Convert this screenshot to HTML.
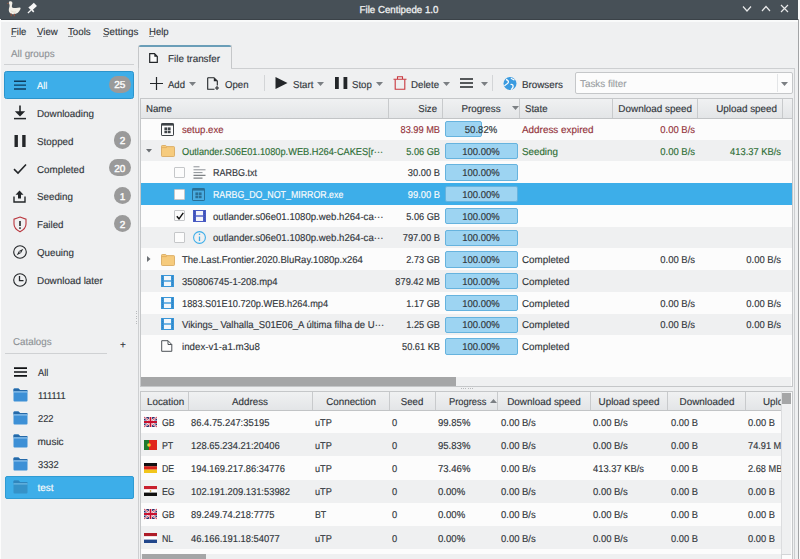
<!DOCTYPE html><html><head><meta charset="utf-8"><title>File Centipede</title><style>
html,body{margin:0;padding:0;}
body{width:800px;height:559px;overflow:hidden;position:relative;background:#eff0f1;font-family:"Liberation Sans", sans-serif;}
.t{-webkit-text-stroke:0.15px currentColor;text-rendering:geometricPrecision;position:absolute;white-space:nowrap;line-height:20px;height:20px;}
.b{position:absolute;}
svg.b{overflow:visible;}

</style></head><body>
<div class="b" style="left:798px;top:0px;width:2px;height:559px;background:#fafafa;"></div>
<div class="b" style="left:798px;top:19px;width:1px;height:540px;background:#a2a4a6;"></div>
<div class="b" style="left:0px;top:0px;width:798px;height:19px;background:#475057;"></div>
<div class="b" style="left:0px;top:19px;width:798px;height:1px;background:#3b4248;"></div>
<div class="b" style="left:0px;top:20px;width:798px;height:2px;background:#f9fafa;"></div>
<div class="b" style="left:0px;top:19px;width:1px;height:540px;background:#fcfcfc;"></div>
<div class="t" style="left:199px;width:400px;text-align:center;top:0.94px;font-size:10.0px;color:#eff0f1;transform:scaleX(0.9707);transform-origin:center;-webkit-text-stroke:0.3px #eff0f1;">File Centipede 1.0</div>
<svg class="b" style="left:742px;top:5px" width="10" height="8" viewBox="0 0 10 8"><path d="M1 1.5 L5 6 L9 1.5" stroke="#e8e9ea" stroke-width="1.2" fill="none"/></svg>
<svg class="b" style="left:761px;top:5px" width="10" height="8" viewBox="0 0 10 8"><path d="M1 6 L5 1.5 L9 6" stroke="#e8e9ea" stroke-width="1.2" fill="none"/></svg>
<svg class="b" style="left:780px;top:4px" width="9" height="9" viewBox="0 0 9 9"><path d="M1 1 L8 8 M8 1 L1 8" stroke="#e8e9ea" stroke-width="1.2" fill="none"/></svg>
<svg class="b" style="left:0px;top:0px" width="40" height="19" viewBox="0 0 40 19"><path d="M8.6 4.2 L6.9 3.6 L8.4 2.4z" fill="#9a5a44"/>
<path d="M9.2 1.6 C10.8 0.6 12.6 1.4 12.4 3.2 C12.2 4.6 11.6 5.8 12 7.2 C13.6 8.2 16.5 8.4 19.6 7.6 C20.6 7.4 20.8 8.2 20.4 9.2 C19.4 11.8 17 14 13.6 14.2 C10.6 14.4 8.9 12.6 8.8 10.2 C8.7 8.2 9.9 6.8 9.5 5 C9.2 3.8 8.5 2.6 9.2 1.6z" fill="#f3f0e8"/>
<path d="M11.2 13.6 V16.3 M14.4 13.8 V16.3" stroke="#8a5040" stroke-width="1.3"/>
<path d="M10.8 10.5 C12 12 14 12.4 16 11.8" stroke="#d8d2c4" stroke-width="0.7" fill="none"/>
<path d="M30.8 8.6 L35.4 4.4" stroke="#f7f7f7" stroke-width="4.6" stroke-linecap="butt"/>
<path d="M28.9 7.0 L33.8 11.9" stroke="#f7f7f7" stroke-width="1.5"/>
<path d="M30.9 10.2 L27.9 13" stroke="#f7f7f7" stroke-width="1.2"/></svg>
<div class="t" style="left:11px;top:22.93px;font-size:10.0px;color:#31363b;transform:scaleX(0.9545);transform-origin:left;">File</div>
<div class="b" style="left:11px;top:36px;width:4.5px;height:1.4px;background:#8a8d90;"></div>
<div class="t" style="left:37px;top:22.93px;font-size:10.0px;color:#31363b;transform:scaleX(0.9631);transform-origin:left;">View</div>
<div class="b" style="left:37px;top:36px;width:4.5px;height:1.4px;background:#8a8d90;"></div>
<div class="t" style="left:68px;top:22.93px;font-size:10.0px;color:#31363b;transform:scaleX(0.9700);transform-origin:left;">Tools</div>
<div class="b" style="left:68px;top:36px;width:4.5px;height:1.4px;background:#8a8d90;"></div>
<div class="t" style="left:103px;top:22.93px;font-size:10.0px;color:#31363b;transform:scaleX(0.9778);transform-origin:left;">Settings</div>
<div class="b" style="left:103px;top:36px;width:4.5px;height:1.4px;background:#8a8d90;"></div>
<div class="t" style="left:149px;top:22.93px;font-size:10.0px;color:#31363b;transform:scaleX(0.9579);transform-origin:left;">Help</div>
<div class="b" style="left:149px;top:36px;width:4.5px;height:1.4px;background:#8a8d90;"></div>
<div class="t" style="left:11px;top:44.94px;font-size:10.0px;color:#8e9296;transform:scaleX(0.9820);transform-origin:left;">All groups</div>
<div class="b" style="left:4px;top:64px;width:130px;height:1px;background:#cfd1d3;"></div>
<div class="b" style="left:4px;top:71px;width:130px;height:28px;background:#3daee9;border-radius:2.5px;box-sizing:border-box;border:1px solid #2b94cc;"></div>
<div class="t" style="left:37px;top:76.94px;font-size:10.0px;color:#fcfcfc;transform:scaleX(0.9280);transform-origin:left;">All</div>
<div class="b" style="left:108.5px;top:75.9px;width:22px;height:17px;background:#9a9a9a;border-radius:8.5px;"></div>
<div class="t" style="left:-80.2px;width:400px;text-align:center;top:76.14px;font-size:10.0px;color:#fcfcfc;-webkit-text-stroke:0.4px #fcfcfc;">25</div>
<div class="t" style="left:37px;top:104.80px;font-size:10.0px;color:#31363b;transform:scaleX(0.9850);transform-origin:left;">Downloading</div>
<div class="t" style="left:37px;top:132.66px;font-size:10.0px;color:#31363b;transform:scaleX(0.9785);transform-origin:left;">Stopped</div>
<div class="b" style="left:113.6px;top:131.22px;width:17.4px;height:17.4px;background:#9a9a9a;border-radius:50%;"></div>
<div class="t" style="left:-77.6px;width:400px;text-align:center;top:132.06px;font-size:10.0px;color:#fcfcfc;-webkit-text-stroke:0.4px #fcfcfc;">2</div>
<div class="t" style="left:37px;top:160.51px;font-size:10.0px;color:#31363b;transform:scaleX(0.9821);transform-origin:left;">Completed</div>
<div class="b" style="left:108.5px;top:159.48px;width:22px;height:17px;background:#9a9a9a;border-radius:8.5px;"></div>
<div class="t" style="left:-80.2px;width:400px;text-align:center;top:159.71px;font-size:10.0px;color:#fcfcfc;-webkit-text-stroke:0.4px #fcfcfc;">20</div>
<div class="t" style="left:37px;top:188.38px;font-size:10.0px;color:#31363b;transform:scaleX(0.9782);transform-origin:left;">Seeding</div>
<div class="b" style="left:113.6px;top:186.94px;width:17.4px;height:17.4px;background:#9a9a9a;border-radius:50%;"></div>
<div class="t" style="left:-77.6px;width:400px;text-align:center;top:187.78px;font-size:10.0px;color:#fcfcfc;-webkit-text-stroke:0.4px #fcfcfc;">1</div>
<div class="t" style="left:37px;top:216.24px;font-size:10.0px;color:#31363b;transform:scaleX(0.9731);transform-origin:left;">Failed</div>
<div class="b" style="left:113.6px;top:214.8px;width:17.4px;height:17.4px;background:#9a9a9a;border-radius:50%;"></div>
<div class="t" style="left:-77.6px;width:400px;text-align:center;top:215.64px;font-size:10.0px;color:#fcfcfc;-webkit-text-stroke:0.4px #fcfcfc;">2</div>
<div class="t" style="left:37px;top:244.09px;font-size:10.0px;color:#31363b;transform:scaleX(0.9753);transform-origin:left;">Queuing</div>
<div class="t" style="left:37px;top:271.95px;font-size:10.0px;color:#31363b;transform:scaleX(0.9870);transform-origin:left;">Download later</div>
<svg class="b" style="left:14px;top:80px" width="12" height="10" viewBox="0 0 12 10"><path d="M0 1.3H12M0 5.1H12M0 8.9H12" stroke="#0f3d5e" stroke-width="1.45"/></svg>
<svg class="b" style="left:14px;top:105px" width="12" height="15" viewBox="0 0 12 15"><path d="M6 0.5V7" stroke="#232629" stroke-width="1.6"/><path d="M0.8 6.2 L11.2 6.2 L6 11.6z" fill="#232629"/><path d="M0 13.6H12" stroke="#232629" stroke-width="1.5"/></svg>
<svg class="b" style="left:14px;top:135px" width="12" height="12" viewBox="0 0 12 12"><rect x="0.5" y="0" width="3.4" height="12" fill="#232629"/><rect x="8.2" y="0" width="3.4" height="12" fill="#232629"/></svg>
<svg class="b" style="left:13px;top:163px" width="14" height="12" viewBox="0 0 14 12"><path d="M1 6.2 L5 10 L13 1.5" stroke="#232629" stroke-width="1.6" fill="none"/></svg>
<svg class="b" style="left:13px;top:190px" width="13" height="13" viewBox="0 0 13 13"><path d="M6.5 0.5 L10.5 4.8 H8 V8.5 H5 V4.8 H2.5z" fill="#232629"/><path d="M1 6.5 V12 H12 V6.5" stroke="#232629" stroke-width="1.4" fill="none"/></svg>
<svg class="b" style="left:13px;top:216px" width="14" height="17" viewBox="0 0 14 17"><path d="M7 1 L13 3.2 V8 C13 11.5 10.5 14 7 15.8 C3.5 14 1 11.5 1 8 V3.2z" stroke="#b9353d" stroke-width="1.1" fill="none"/><path d="M7 5V10" stroke="#232629" stroke-width="1.6"/><rect x="6.2" y="11.3" width="1.6" height="1.6" fill="#232629"/></svg>
<svg class="b" style="left:13px;top:245px" width="14" height="14" viewBox="0 0 14 14"><circle cx="7" cy="7" r="6.3" stroke="#232629" stroke-width="1.1" fill="none"/><path d="M10.3 3.7 L8 8 L3.7 10.3 L6 6z" fill="#232629"/><circle cx="7" cy="7" r="0.8" fill="#eff0f1"/></svg>
<svg class="b" style="left:13px;top:273px" width="14" height="14" viewBox="0 0 14 14"><circle cx="7" cy="7" r="6.3" stroke="#232629" stroke-width="1.1" fill="none"/><path d="M6.5 3 V7.6 H10.5" stroke="#232629" stroke-width="1.3" fill="none"/></svg>
<div class="b" style="left:136px;top:311.0px;width:1px;height:1px;background:#b8babc;"></div>
<div class="b" style="left:136px;top:313.4px;width:1px;height:1px;background:#b8babc;"></div>
<div class="b" style="left:136px;top:315.8px;width:1px;height:1px;background:#b8babc;"></div>
<div class="b" style="left:136px;top:318.2px;width:1px;height:1px;background:#b8babc;"></div>
<div class="b" style="left:136px;top:320.6px;width:1px;height:1px;background:#b8babc;"></div>
<div class="b" style="left:136px;top:323.0px;width:1px;height:1px;background:#b8babc;"></div>
<div class="t" style="left:12.5px;top:332.94px;font-size:10.0px;color:#8e9296;transform:scaleX(0.9780);transform-origin:left;">Catalogs</div>
<div class="t" style="left:-77px;width:400px;text-align:center;top:335.94px;font-size:10.0px;color:#31363b;">+</div>
<div class="b" style="left:5px;top:353px;width:102px;height:1px;background:#cfd1d3;"></div>
<div class="b" style="left:5px;top:476px;width:129px;height:23px;background:#3daee9;border-radius:2px;box-sizing:border-box;border:1px solid #2f9bd3;"></div>
<div class="t" style="left:37.5px;top:363.94px;font-size:10.0px;color:#31363b;transform:scaleX(0.9280);transform-origin:left;">All</div>
<svg class="b" style="left:14px;top:366.5px" width="13" height="10" viewBox="0 0 13 10"><path d="M0 1.1H13M0 5H13M0 8.9H13" stroke="#101214" stroke-width="1.7"/></svg>
<div class="t" style="left:37.5px;top:387.04px;font-size:10.0px;color:#31363b;transform:scaleX(0.9300);transform-origin:left;">111111</div>
<svg class="b" style="left:13px;top:387.6px" width="15" height="14" viewBox="0 0 15 14"><path d="M0.5 1.5 Q0.5 0.5 1.5 0.5 H5.5 L7 2 H13.5 Q14.5 2 14.5 3 V12.5 Q14.5 13.5 13.5 13.5 H1.5 Q0.5 13.5 0.5 12.5z" fill="#3d90d6"/><path d="M0.5 1.5 Q0.5 0.5 1.5 0.5 H5.5 L7 2 H13.5 Q14.5 2 14.5 3 V3.4 H0.5z" fill="#2569a8"/><path d="M0.5 3.9 H14.5" stroke="#a9d4f5" stroke-width="1"/></svg>
<div class="t" style="left:37.5px;top:410.13px;font-size:10.0px;color:#31363b;transform:scaleX(0.9300);transform-origin:left;">222</div>
<svg class="b" style="left:13px;top:410.7px" width="15" height="14" viewBox="0 0 15 14"><path d="M0.5 1.5 Q0.5 0.5 1.5 0.5 H5.5 L7 2 H13.5 Q14.5 2 14.5 3 V12.5 Q14.5 13.5 13.5 13.5 H1.5 Q0.5 13.5 0.5 12.5z" fill="#3d90d6"/><path d="M0.5 1.5 Q0.5 0.5 1.5 0.5 H5.5 L7 2 H13.5 Q14.5 2 14.5 3 V3.4 H0.5z" fill="#2569a8"/><path d="M0.5 3.9 H14.5" stroke="#a9d4f5" stroke-width="1"/></svg>
<div class="t" style="left:37.5px;top:433.24px;font-size:10.0px;color:#31363b;">music</div>
<svg class="b" style="left:13px;top:433.8px" width="15" height="14" viewBox="0 0 15 14"><path d="M0.5 1.5 Q0.5 0.5 1.5 0.5 H5.5 L7 2 H13.5 Q14.5 2 14.5 3 V12.5 Q14.5 13.5 13.5 13.5 H1.5 Q0.5 13.5 0.5 12.5z" fill="#3d90d6"/><path d="M0.5 1.5 Q0.5 0.5 1.5 0.5 H5.5 L7 2 H13.5 Q14.5 2 14.5 3 V3.4 H0.5z" fill="#2569a8"/><path d="M0.5 3.9 H14.5" stroke="#a9d4f5" stroke-width="1"/></svg>
<div class="t" style="left:37.5px;top:456.33px;font-size:10.0px;color:#31363b;transform:scaleX(0.9300);transform-origin:left;">3332</div>
<svg class="b" style="left:13px;top:456.9px" width="15" height="14" viewBox="0 0 15 14"><path d="M0.5 1.5 Q0.5 0.5 1.5 0.5 H5.5 L7 2 H13.5 Q14.5 2 14.5 3 V12.5 Q14.5 13.5 13.5 13.5 H1.5 Q0.5 13.5 0.5 12.5z" fill="#3d90d6"/><path d="M0.5 1.5 Q0.5 0.5 1.5 0.5 H5.5 L7 2 H13.5 Q14.5 2 14.5 3 V3.4 H0.5z" fill="#2569a8"/><path d="M0.5 3.9 H14.5" stroke="#a9d4f5" stroke-width="1"/></svg>
<div class="t" style="left:37.5px;top:479.44px;font-size:10.0px;color:#fcfcfc;">test</div>
<svg class="b" style="left:13px;top:480.0px" width="15" height="14" viewBox="0 0 15 14"><path d="M0.5 1.5 Q0.5 0.5 1.5 0.5 H5.5 L7 2 H13.5 Q14.5 2 14.5 3 V12.5 Q14.5 13.5 13.5 13.5 H1.5 Q0.5 13.5 0.5 12.5z" fill="#3592c8"/><path d="M0.5 1.5 Q0.5 0.5 1.5 0.5 H5.5 L7 2 H13.5 Q14.5 2 14.5 3 V3.4 H0.5z" fill="#2f86bd"/><path d="M0.5 3.9 H14.5" stroke="#7cc3ea" stroke-width="1"/></svg>
<div class="b" style="left:138px;top:45px;width:94px;height:24px;background:#eff0f1;box-sizing:border-box;border:1px solid #c5c7c9;border-bottom:none;border-radius:2px 2px 0 0;"></div>
<div class="b" style="left:139px;top:45px;width:92px;height:2px;background:#6a9eb8;border-radius:2px 2px 0 0;"></div>
<svg class="b" style="left:149px;top:53px" width="9" height="10" viewBox="0 0 9 10"><path d="M0.7 0.7 H5.5 L8.3 3.5 V9.3 H0.7z" stroke="#232629" stroke-width="1.2" fill="#fcfcfc"/><path d="M5.3 0.7 L8.3 3.7 H5.3z" fill="#232629"/></svg>
<div class="t" style="left:167.5px;top:49.94px;font-size:10.0px;color:#31363b;transform:scaleX(0.9861);transform-origin:left;">File transfer</div>
<div class="b" style="left:138px;top:68px;width:657px;height:600px;box-sizing:border-box;border:1px solid #cdcfd1;border-bottom:none;"></div>
<div class="b" style="left:139px;top:68px;width:92px;height:1px;background:#eff0f1;"></div>
<svg class="b" style="left:150px;top:77px" width="13" height="13" viewBox="0 0 13 13"><path d="M6.5 0V13M0 6.5H13" stroke="#232629" stroke-width="1.2"/></svg>
<div class="t" style="left:167.5px;top:75.94px;font-size:10.0px;color:#31363b;transform:scaleX(0.9550);transform-origin:left;">Add</div>
<svg class="b" style="left:188.5px;top:82px" width="7" height="4" viewBox="0 0 7 4"><path d="M0 0H7L3.5 4z" fill="#7b7f83"/></svg>
<svg class="b" style="left:207px;top:77px" width="13" height="13" viewBox="0 0 13 13"><path d="M0.7 0.7H7L10.3 4V8.5" stroke="#232629" stroke-width="1.1" fill="none"/><path d="M0.7 0.7V12.3H7.5" stroke="#232629" stroke-width="1.1" fill="none"/><path d="M6.8 0.7 L10.3 4.2 H6.8z" fill="#232629"/><path d="M10 9V13M8 11H12" stroke="#232629" stroke-width="1.1"/></svg>
<div class="t" style="left:224.5px;top:75.94px;font-size:10.0px;color:#31363b;transform:scaleX(0.9618);transform-origin:left;">Open</div>
<div class="b" style="left:264px;top:75px;width:1px;height:16px;background:#d3d5d7;"></div>
<svg class="b" style="left:275px;top:77px" width="13" height="12" viewBox="0 0 13 12"><path d="M0.5 0 L12.5 6 L0.5 12z" fill="#232629"/></svg>
<div class="t" style="left:292.5px;top:75.94px;font-size:10.0px;color:#31363b;transform:scaleX(0.9621);transform-origin:left;">Start</div>
<svg class="b" style="left:317px;top:82px" width="7" height="4" viewBox="0 0 7 4"><path d="M0 0H7L3.5 4z" fill="#7b7f83"/></svg>
<svg class="b" style="left:334.5px;top:77px" width="13" height="12" viewBox="0 0 13 12"><rect x="0" y="0" width="3.8" height="12" fill="#232629"/><rect x="8.5" y="0" width="3.8" height="12" fill="#232629"/></svg>
<div class="t" style="left:351.5px;top:75.94px;font-size:10.0px;color:#31363b;transform:scaleX(0.9611);transform-origin:left;">Stop</div>
<svg class="b" style="left:376px;top:82px" width="7" height="4" viewBox="0 0 7 4"><path d="M0 0H7L3.5 4z" fill="#7b7f83"/></svg>
<svg class="b" style="left:393px;top:76px" width="14" height="14" viewBox="0 0 14 14"><path d="M0.5 3.2H13.5M4.5 3V0.7H9.5V3" stroke="#c9373e" stroke-width="1.1" fill="none"/><path d="M2.2 3.5V13.3H11.8V3.5" stroke="#c9373e" stroke-width="1.1" fill="none"/></svg>
<div class="t" style="left:410.5px;top:75.94px;font-size:10.0px;color:#31363b;transform:scaleX(0.9700);transform-origin:left;">Delete</div>
<svg class="b" style="left:442.5px;top:82px" width="7" height="4" viewBox="0 0 7 4"><path d="M0 0H7L3.5 4z" fill="#7b7f83"/></svg>
<svg class="b" style="left:459.5px;top:78px" width="13" height="10" viewBox="0 0 13 10"><path d="M0 1H13M0 5H13M0 9H13" stroke="#232629" stroke-width="1.6"/></svg>
<svg class="b" style="left:481px;top:82px" width="7" height="4" viewBox="0 0 7 4"><path d="M0 0H7L3.5 4z" fill="#7b7f83"/></svg>
<div class="b" style="left:492px;top:75px;width:1px;height:16px;background:#d3d5d7;"></div>
<svg class="b" style="left:503px;top:77px" width="14" height="13" viewBox="0 0 14 13"><circle cx="7" cy="6.5" r="6.5" fill="#3a9be0"/><path d="M3 2.5 C5 3 6 4.5 5 6 C4 7.5 2.5 7 1.5 9 M8 1 C9 2.5 10.5 2.5 11.5 3 M7.5 7.5 C9 7 10.5 8 10 10 C9.6 11.5 8.5 12 8 12.5" stroke="#fcfcfc" stroke-width="1.3" fill="none"/></svg>
<div class="t" style="left:521.5px;top:75.94px;font-size:10.0px;color:#31363b;transform:scaleX(0.9808);transform-origin:left;">Browsers</div>
<div class="b" style="left:574.5px;top:72px;width:218px;height:21.5px;background:#fcfcfc;box-sizing:border-box;border:1px solid #c5c7c9;border-radius:2px;"></div>
<div class="b" style="left:776.5px;top:74px;width:1px;height:18px;background:#e3e5e7;"></div>
<div class="t" style="left:580px;top:74.94px;font-size:10.0px;color:#9a9ea2;transform:scaleX(0.9848);transform-origin:left;">Tasks filter</div>
<svg class="b" style="left:780.5px;top:82px" width="7" height="4" viewBox="0 0 7 4"><path d="M0 0H7L3.5 4z" fill="#7b7f83"/></svg>
<div class="b" style="left:140px;top:98px;width:653px;height:289px;background:#fcfcfc;box-sizing:border-box;border:1px solid #c5c7c9;"></div>
<div class="b" style="left:141px;top:99px;width:651px;height:20px;background:linear-gradient(#f0f1f2,#e3e5e7);border-bottom:1px solid #c2c4c6;box-sizing:border-box;"></div>
<div class="b" style="left:388px;top:99px;width:1px;height:19px;background:#c8cacc;"></div>
<div class="b" style="left:442px;top:99px;width:1px;height:19px;background:#c8cacc;"></div>
<div class="b" style="left:519px;top:99px;width:1px;height:19px;background:#c8cacc;"></div>
<div class="b" style="left:612px;top:99px;width:1px;height:19px;background:#c8cacc;"></div>
<div class="b" style="left:697px;top:99px;width:1px;height:19px;background:#c8cacc;"></div>
<div class="b" style="left:782px;top:99px;width:1px;height:19px;background:#c8cacc;"></div>
<div class="t" style="left:145.5px;top:100.44px;font-size:10.0px;color:#31363b;transform:scaleX(0.9675);transform-origin:left;">Name</div>
<div class="t" style="left:37px;width:400px;text-align:right;top:100.44px;font-size:10.0px;color:#31363b;transform:scaleX(0.9589);transform-origin:right;">Size</div>
<div class="t" style="left:280.5px;width:400px;text-align:center;top:100.44px;font-size:10.0px;color:#31363b;transform:scaleX(0.9800);transform-origin:center;">Progress</div>
<svg class="b" style="left:512px;top:106px" width="7" height="4" viewBox="0 0 7 4"><path d="M0 0H7L3.5 4z" fill="#7b7f83"/></svg>
<div class="t" style="left:524.5px;top:100.44px;font-size:10.0px;color:#31363b;transform:scaleX(0.9657);transform-origin:left;">State</div>
<div class="t" style="left:292px;width:400px;text-align:right;top:100.44px;font-size:10.0px;color:#31363b;transform:scaleX(0.9884);transform-origin:right;">Download speed</div>
<div class="t" style="left:377px;width:400px;text-align:right;top:100.44px;font-size:10.0px;color:#31363b;transform:scaleX(0.9860);transform-origin:right;">Upload speed</div>
<svg class="b" style="left:161px;top:122.67px" width="13" height="13" viewBox="0 0 13 13"><rect x="0.5" y="0.5" width="12" height="12" rx="0.6" fill="#fcfcfc" stroke="#3d4246" stroke-width="1"/><path d="M0.5 1.6H12.5" stroke="#3d4246" stroke-width="2"/><rect x="3.4" y="4.4" width="2.8" height="2.6" fill="#3d4246"/><rect x="6.8" y="4.4" width="2.8" height="2.6" fill="#3d4246"/><rect x="3.4" y="7.6" width="2.8" height="2.6" fill="#3d4246"/><rect x="6.8" y="7.6" width="2.8" height="2.6" fill="#3d4246"/></svg>
<div class="t" style="left:182px;top:120.80px;font-size:10.0px;color:#93323a;transform:scaleX(0.9584);transform-origin:left;">setup.exe</div>
<div class="t" style="left:40px;width:400px;text-align:right;top:120.80px;font-size:10.0px;color:#93323a;transform:scaleX(0.9216);transform-origin:right;">83.99 MB</div>
<div class="b" style="left:444.5px;top:121.0px;width:73px;height:15.73px;background:transparent;"></div>
<div class="b" style="left:444.5px;top:121.0px;width:37.1px;height:16.23px;background:#9dd4f2;box-sizing:border-box;border:1px solid #66b3de;border-radius:2px;"></div>
<div class="t" style="left:281px;width:400px;text-align:center;top:120.80px;font-size:10.0px;color:#31363b;transform:scaleX(0.9541);transform-origin:center;">50.82%</div>
<div class="t" style="left:522px;top:120.80px;font-size:10.0px;color:#93323a;transform:scaleX(0.9889);transform-origin:left;">Address expired</div>
<div class="t" style="left:295px;width:400px;text-align:right;top:120.80px;font-size:10.0px;color:#93323a;transform:scaleX(0.9464);transform-origin:right;">0.00 B/s</div>
<div class="b" style="left:141px;top:139.73px;width:651px;height:21.73px;background:#eff0f1;"></div>
<svg class="b" style="left:145.5px;top:148.59px" width="6" height="4" viewBox="0 0 6 4"><path d="M0 0H6L3 3.5z" fill="#6b6f73"/></svg>
<svg class="b" style="left:161px;top:145.19px" width="14" height="12" viewBox="0 0 14 12"><path d="M0.5 1.3 Q0.5 0.5 1.3 0.5 H4.6 L5.8 1.6 H12.7 Q13.5 1.6 13.5 2.4 V10.7 Q13.5 11.5 12.7 11.5 H1.3 Q0.5 11.5 0.5 10.7z" fill="#f6cb7d" stroke="#d6a558" stroke-width="0.8"/><path d="M0.9 2.6 H5.2 L6 1.9" stroke="#e2ad5c" stroke-width="0.9" fill="none"/></svg>
<div class="t" style="left:182px;top:142.53px;font-size:10.0px;color:#2e6e35;transform:scaleX(0.9226);transform-origin:left;">Outlander.S06E01.1080p.WEB.H264-CAKES[r···</div>
<div class="t" style="left:40px;width:400px;text-align:right;top:142.53px;font-size:10.0px;color:#2e6e35;transform:scaleX(0.9209);transform-origin:right;">5.06 GB</div>
<div class="b" style="left:444.5px;top:142.73px;width:73px;height:15.73px;background:transparent;"></div>
<div class="b" style="left:444.5px;top:142.73px;width:73.0px;height:16.23px;background:#9dd4f2;box-sizing:border-box;border:1px solid #66b3de;border-radius:2px;"></div>
<div class="t" style="left:281px;width:400px;text-align:center;top:142.53px;font-size:10.0px;color:#31363b;transform:scaleX(0.9507);transform-origin:center;">100.00%</div>
<div class="t" style="left:522px;top:142.53px;font-size:10.0px;color:#2e6e35;transform:scaleX(0.9782);transform-origin:left;">Seeding</div>
<div class="t" style="left:295px;width:400px;text-align:right;top:142.53px;font-size:10.0px;color:#2e6e35;transform:scaleX(0.9464);transform-origin:right;">0.00 B/s</div>
<div class="t" style="left:380.5px;width:400px;text-align:right;top:142.53px;font-size:10.0px;color:#2e6e35;transform:scaleX(0.9349);transform-origin:right;">413.37 KB/s</div>
<div class="b" style="left:174px;top:166.83px;width:11px;height:11px;background:#fcfcfc;box-sizing:border-box;border:1px solid #c5c7c9;border-radius:1px;"></div>
<svg class="b" style="left:192.5px;top:165.83px" width="13" height="13" viewBox="0 0 13 13"><path d="M0.5 0.8H6.5M0.5 3.8H12.5M0.5 6.6H9.5" stroke="#8c9196" stroke-width="1"/><path d="M0.5 9.3H12.5M0.5 12.1H9.5" stroke="#5d6266" stroke-width="1"/></svg>
<div class="t" style="left:213px;top:164.26px;font-size:10.0px;color:#31363b;transform:scaleX(0.9001);transform-origin:left;">RARBG.txt</div>
<div class="t" style="left:40px;width:400px;text-align:right;top:164.26px;font-size:10.0px;color:#31363b;transform:scaleX(0.9316);transform-origin:right;">30.00 B</div>
<div class="b" style="left:444.5px;top:164.46px;width:73px;height:15.73px;background:transparent;"></div>
<div class="b" style="left:444.5px;top:164.46px;width:73.0px;height:16.23px;background:#9dd4f2;box-sizing:border-box;border:1px solid #66b3de;border-radius:2px;"></div>
<div class="t" style="left:281px;width:400px;text-align:center;top:164.26px;font-size:10.0px;color:#31363b;transform:scaleX(0.9507);transform-origin:center;">100.00%</div>
<div class="b" style="left:141px;top:183.19px;width:651px;height:21.73px;background:#3daee9;"></div>
<div class="b" style="left:174px;top:188.56px;width:11px;height:11px;background:#fcfcfc;box-sizing:border-box;border:1px solid #c5c7c9;border-radius:1px;"></div>
<svg class="b" style="left:192.0px;top:187.86px" width="13" height="13" viewBox="0 0 13 13"><rect x="0.5" y="0.5" width="12" height="12" rx="0.6" fill="#4aaee3" stroke="#2a6f96" stroke-width="1"/><path d="M0.5 1.6H12.5" stroke="#2a6f96" stroke-width="2"/><rect x="3.4" y="4.4" width="2.8" height="2.6" fill="#2a6f96"/><rect x="6.8" y="4.4" width="2.8" height="2.6" fill="#2a6f96"/><rect x="3.4" y="7.6" width="2.8" height="2.6" fill="#2a6f96"/><rect x="6.8" y="7.6" width="2.8" height="2.6" fill="#2a6f96"/></svg>
<div class="t" style="left:213px;top:185.99px;font-size:10.0px;color:#fcfcfc;transform:scaleX(0.8815);transform-origin:left;">RARBG_DO_NOT_MIRROR.exe</div>
<div class="t" style="left:40px;width:400px;text-align:right;top:185.99px;font-size:10.0px;color:#fcfcfc;transform:scaleX(0.9316);transform-origin:right;">99.00 B</div>
<div class="b" style="left:444.5px;top:186.19px;width:73px;height:15.73px;background:transparent;"></div>
<div class="b" style="left:444.5px;top:186.19px;width:73.0px;height:16.23px;background:#9dd4f2;box-sizing:border-box;border:1px solid #66b3de;border-radius:2px;"></div>
<div class="t" style="left:281px;width:400px;text-align:center;top:185.99px;font-size:10.0px;color:#31363b;transform:scaleX(0.9507);transform-origin:center;">100.00%</div>
<div class="b" style="left:174px;top:210.29px;width:11px;height:11px;background:#fcfcfc;box-sizing:border-box;border:1px solid #c5c7c9;border-radius:1px;"></div>
<svg class="b" style="left:175.5px;top:211.79px" width="8" height="8" viewBox="0 0 8 8"><path d="M0.8 4.2 L3 6.8 L7.3 0.8" stroke="#111" stroke-width="1.4" fill="none"/></svg>
<svg class="b" style="left:192.5px;top:209.59px" width="13" height="12" viewBox="0 0 13 12"><rect x="0" y="0" width="13" height="12" fill="#4a5cc4"/><rect x="3" y="1" width="7" height="4.3" fill="#f4f4fa"/><rect x="3" y="6.7" width="7" height="4.3" fill="#f4f4fa"/><path d="M1.5 0.8V11.2M11.5 0.8V11.2" stroke="#3646a6" stroke-width="0.9" stroke-dasharray="0.9 1.1"/></svg>
<div class="t" style="left:213px;top:207.72px;font-size:10.0px;color:#31363b;transform:scaleX(0.9606);transform-origin:left;">outlander.s06e01.1080p.web.h264-ca···</div>
<div class="t" style="left:40px;width:400px;text-align:right;top:207.72px;font-size:10.0px;color:#31363b;transform:scaleX(0.9209);transform-origin:right;">5.06 GB</div>
<div class="b" style="left:444.5px;top:207.92px;width:73px;height:15.73px;background:transparent;"></div>
<div class="b" style="left:444.5px;top:207.92px;width:73.0px;height:16.23px;background:#9dd4f2;box-sizing:border-box;border:1px solid #66b3de;border-radius:2px;"></div>
<div class="t" style="left:281px;width:400px;text-align:center;top:207.72px;font-size:10.0px;color:#31363b;transform:scaleX(0.9507);transform-origin:center;">100.00%</div>
<div class="b" style="left:141px;top:226.65px;width:651px;height:21.73px;background:#eff0f1;"></div>
<div class="b" style="left:174px;top:232.02px;width:11px;height:11px;background:#fcfcfc;box-sizing:border-box;border:1px solid #c5c7c9;border-radius:1px;"></div>
<svg class="b" style="left:192.5px;top:231.02px" width="13" height="13" viewBox="0 0 13 13"><circle cx="6.5" cy="6.5" r="5.9" fill="none" stroke="#3daee9" stroke-width="1.1"/><path d="M6.5 5.5V10" stroke="#3daee9" stroke-width="1.3"/><rect x="5.85" y="2.6" width="1.3" height="1.4" fill="#3daee9"/></svg>
<div class="t" style="left:213px;top:229.45px;font-size:10.0px;color:#31363b;transform:scaleX(0.9606);transform-origin:left;">outlander.s06e01.1080p.web.h264-ca···</div>
<div class="t" style="left:40px;width:400px;text-align:right;top:229.45px;font-size:10.0px;color:#31363b;transform:scaleX(0.9314);transform-origin:right;">797.00 B</div>
<div class="b" style="left:444.5px;top:229.65px;width:73px;height:15.73px;background:transparent;"></div>
<div class="b" style="left:444.5px;top:229.65px;width:73.0px;height:16.23px;background:#9dd4f2;box-sizing:border-box;border:1px solid #66b3de;border-radius:2px;"></div>
<div class="t" style="left:281px;width:400px;text-align:center;top:229.45px;font-size:10.0px;color:#31363b;transform:scaleX(0.9507);transform-origin:center;">100.00%</div>
<svg class="b" style="left:147px;top:256.25px" width="4" height="6" viewBox="0 0 4 6"><path d="M0 0V6L3.5 3z" fill="#6b6f73"/></svg>
<svg class="b" style="left:161px;top:253.84px" width="14" height="12" viewBox="0 0 14 12"><path d="M0.5 1.3 Q0.5 0.5 1.3 0.5 H4.6 L5.8 1.6 H12.7 Q13.5 1.6 13.5 2.4 V10.7 Q13.5 11.5 12.7 11.5 H1.3 Q0.5 11.5 0.5 10.7z" fill="#f6cb7d" stroke="#d6a558" stroke-width="0.8"/><path d="M0.9 2.6 H5.2 L6 1.9" stroke="#e2ad5c" stroke-width="0.9" fill="none"/></svg>
<div class="t" style="left:182px;top:251.18px;font-size:10.0px;color:#31363b;transform:scaleX(0.9522);transform-origin:left;">The.Last.Frontier.2020.BluRay.1080p.x264</div>
<div class="t" style="left:40px;width:400px;text-align:right;top:251.18px;font-size:10.0px;color:#31363b;transform:scaleX(0.9209);transform-origin:right;">2.73 GB</div>
<div class="b" style="left:444.5px;top:251.38px;width:73px;height:15.73px;background:transparent;"></div>
<div class="b" style="left:444.5px;top:251.38px;width:73.0px;height:16.23px;background:#9dd4f2;box-sizing:border-box;border:1px solid #66b3de;border-radius:2px;"></div>
<div class="t" style="left:281px;width:400px;text-align:center;top:251.18px;font-size:10.0px;color:#31363b;transform:scaleX(0.9507);transform-origin:center;">100.00%</div>
<div class="t" style="left:522px;top:251.18px;font-size:10.0px;color:#31363b;transform:scaleX(0.9821);transform-origin:left;">Completed</div>
<div class="t" style="left:295px;width:400px;text-align:right;top:251.18px;font-size:10.0px;color:#31363b;transform:scaleX(0.9464);transform-origin:right;">0.00 B/s</div>
<div class="t" style="left:380.5px;width:400px;text-align:right;top:251.18px;font-size:10.0px;color:#31363b;transform:scaleX(0.9464);transform-origin:right;">0.00 B/s</div>
<div class="b" style="left:141px;top:270.11px;width:651px;height:21.73px;background:#eff0f1;"></div>
<svg class="b" style="left:161px;top:274.78px" width="13" height="12" viewBox="0 0 13 12"><rect x="0" y="0" width="13" height="12" fill="#3b97d8"/><rect x="3" y="1" width="7" height="4.3" fill="#f2f7fb"/><rect x="3" y="6.7" width="7" height="4.3" fill="#f2f7fb"/><path d="M1.5 0.8V11.2M11.5 0.8V11.2" stroke="#2a75b5" stroke-width="0.9" stroke-dasharray="0.9 1.1"/></svg>
<div class="t" style="left:182px;top:272.91px;font-size:10.0px;color:#31363b;transform:scaleX(0.9442);transform-origin:left;">350806745-1-208.mp4</div>
<div class="t" style="left:40px;width:400px;text-align:right;top:272.91px;font-size:10.0px;color:#31363b;transform:scaleX(0.9225);transform-origin:right;">879.42 MB</div>
<div class="b" style="left:444.5px;top:273.11px;width:73px;height:15.73px;background:transparent;"></div>
<div class="b" style="left:444.5px;top:273.11px;width:73.0px;height:16.23px;background:#9dd4f2;box-sizing:border-box;border:1px solid #66b3de;border-radius:2px;"></div>
<div class="t" style="left:281px;width:400px;text-align:center;top:272.91px;font-size:10.0px;color:#31363b;transform:scaleX(0.9507);transform-origin:center;">100.00%</div>
<div class="t" style="left:522px;top:272.91px;font-size:10.0px;color:#31363b;transform:scaleX(0.9821);transform-origin:left;">Completed</div>
<svg class="b" style="left:161px;top:296.51px" width="13" height="12" viewBox="0 0 13 12"><rect x="0" y="0" width="13" height="12" fill="#3b97d8"/><rect x="3" y="1" width="7" height="4.3" fill="#f2f7fb"/><rect x="3" y="6.7" width="7" height="4.3" fill="#f2f7fb"/><path d="M1.5 0.8V11.2M11.5 0.8V11.2" stroke="#2a75b5" stroke-width="0.9" stroke-dasharray="0.9 1.1"/></svg>
<div class="t" style="left:182px;top:294.64px;font-size:10.0px;color:#31363b;transform:scaleX(0.9222);transform-origin:left;">1883.S01E10.720p.WEB.h264.mp4</div>
<div class="t" style="left:40px;width:400px;text-align:right;top:294.64px;font-size:10.0px;color:#31363b;transform:scaleX(0.9209);transform-origin:right;">1.17 GB</div>
<div class="b" style="left:444.5px;top:294.84px;width:73px;height:15.73px;background:transparent;"></div>
<div class="b" style="left:444.5px;top:294.84px;width:73.0px;height:16.23px;background:#9dd4f2;box-sizing:border-box;border:1px solid #66b3de;border-radius:2px;"></div>
<div class="t" style="left:281px;width:400px;text-align:center;top:294.64px;font-size:10.0px;color:#31363b;transform:scaleX(0.9507);transform-origin:center;">100.00%</div>
<div class="t" style="left:522px;top:294.64px;font-size:10.0px;color:#31363b;transform:scaleX(0.9821);transform-origin:left;">Completed</div>
<div class="t" style="left:295px;width:400px;text-align:right;top:294.64px;font-size:10.0px;color:#31363b;transform:scaleX(0.9464);transform-origin:right;">0.00 B/s</div>
<div class="t" style="left:380.5px;width:400px;text-align:right;top:294.64px;font-size:10.0px;color:#31363b;transform:scaleX(0.9464);transform-origin:right;">0.00 B/s</div>
<div class="b" style="left:141px;top:313.57px;width:651px;height:21.73px;background:#eff0f1;"></div>
<svg class="b" style="left:161px;top:318.24px" width="13" height="12" viewBox="0 0 13 12"><rect x="0" y="0" width="13" height="12" fill="#3b97d8"/><rect x="3" y="1" width="7" height="4.3" fill="#f2f7fb"/><rect x="3" y="6.7" width="7" height="4.3" fill="#f2f7fb"/><path d="M1.5 0.8V11.2M11.5 0.8V11.2" stroke="#2a75b5" stroke-width="0.9" stroke-dasharray="0.9 1.1"/></svg>
<div class="t" style="left:182px;top:316.37px;font-size:10.0px;color:#31363b;transform:scaleX(0.9512);transform-origin:left;">Vikings_ Valhalla_S01E06_A última filha de U···</div>
<div class="t" style="left:40px;width:400px;text-align:right;top:316.37px;font-size:10.0px;color:#31363b;transform:scaleX(0.9209);transform-origin:right;">1.25 GB</div>
<div class="b" style="left:444.5px;top:316.57px;width:73px;height:15.73px;background:transparent;"></div>
<div class="b" style="left:444.5px;top:316.57px;width:73.0px;height:16.23px;background:#9dd4f2;box-sizing:border-box;border:1px solid #66b3de;border-radius:2px;"></div>
<div class="t" style="left:281px;width:400px;text-align:center;top:316.37px;font-size:10.0px;color:#31363b;transform:scaleX(0.9507);transform-origin:center;">100.00%</div>
<div class="t" style="left:522px;top:316.37px;font-size:10.0px;color:#31363b;transform:scaleX(0.9821);transform-origin:left;">Completed</div>
<div class="t" style="left:295px;width:400px;text-align:right;top:316.37px;font-size:10.0px;color:#31363b;transform:scaleX(0.9464);transform-origin:right;">0.00 B/s</div>
<div class="t" style="left:380.5px;width:400px;text-align:right;top:316.37px;font-size:10.0px;color:#31363b;transform:scaleX(0.9464);transform-origin:right;">0.00 B/s</div>
<svg class="b" style="left:161px;top:340.17px" width="12" height="12" viewBox="0 0 12 12"><path d="M0.7 0.7 H7 L10.8 4.5 V11.3 H0.7z" stroke="#4d5257" stroke-width="1" fill="#fcfcfc"/><path d="M7 0.7V4.5H10.8" stroke="#4d5257" stroke-width="1" fill="none"/></svg>
<div class="t" style="left:182px;top:338.10px;font-size:10.0px;color:#31363b;transform:scaleX(0.9729);transform-origin:left;">index-v1-a1.m3u8</div>
<div class="t" style="left:40px;width:400px;text-align:right;top:338.10px;font-size:10.0px;color:#31363b;transform:scaleX(0.9232);transform-origin:right;">50.61 KB</div>
<div class="b" style="left:444.5px;top:338.3px;width:73px;height:15.73px;background:transparent;"></div>
<div class="b" style="left:444.5px;top:338.3px;width:73.0px;height:16.23px;background:#9dd4f2;box-sizing:border-box;border:1px solid #66b3de;border-radius:2px;"></div>
<div class="t" style="left:281px;width:400px;text-align:center;top:338.10px;font-size:10.0px;color:#31363b;transform:scaleX(0.9507);transform-origin:center;">100.00%</div>
<div class="t" style="left:522px;top:338.10px;font-size:10.0px;color:#31363b;transform:scaleX(0.9821);transform-origin:left;">Completed</div>
<div class="b" style="left:141px;top:377px;width:650px;height:9px;background:#eff0f1;"></div>
<div class="b" style="left:141px;top:377px;width:314.5px;height:9px;background:#a5a6a7;"></div>
<div class="b" style="left:461.0px;top:388px;width:1px;height:1px;background:#b8babc;"></div>
<div class="b" style="left:463.2px;top:388px;width:1px;height:1px;background:#b8babc;"></div>
<div class="b" style="left:465.4px;top:388px;width:1px;height:1px;background:#b8babc;"></div>
<div class="b" style="left:467.6px;top:388px;width:1px;height:1px;background:#b8babc;"></div>
<div class="b" style="left:469.8px;top:388px;width:1px;height:1px;background:#b8babc;"></div>
<div class="b" style="left:472.0px;top:388px;width:1px;height:1px;background:#b8babc;"></div>
<div class="b" style="left:140px;top:391px;width:653px;height:170px;background:#fcfcfc;box-sizing:border-box;border:1px solid #c5c7c9;"></div>
<div class="b" style="left:141px;top:392px;width:650px;height:19px;background:linear-gradient(#f0f1f2,#e3e5e7);border-bottom:1px solid #c2c4c6;box-sizing:border-box;"></div>
<div class="b" style="left:188px;top:392px;width:1px;height:18px;background:#c8cacc;"></div>
<div class="b" style="left:312px;top:392px;width:1px;height:18px;background:#c8cacc;"></div>
<div class="b" style="left:389px;top:392px;width:1px;height:18px;background:#c8cacc;"></div>
<div class="b" style="left:435px;top:392px;width:1px;height:18px;background:#c8cacc;"></div>
<div class="b" style="left:497px;top:392px;width:1px;height:18px;background:#c8cacc;"></div>
<div class="b" style="left:590px;top:392px;width:1px;height:18px;background:#c8cacc;"></div>
<div class="b" style="left:667px;top:392px;width:1px;height:18px;background:#c8cacc;"></div>
<div class="b" style="left:745px;top:392px;width:1px;height:18px;background:#c8cacc;"></div>
<div class="t" style="left:146.5px;top:392.94px;font-size:10.0px;color:#31363b;transform:scaleX(0.9823);transform-origin:left;">Location</div>
<div class="t" style="left:50px;width:400px;text-align:center;top:392.94px;font-size:10.0px;color:#31363b;transform:scaleX(0.9782);transform-origin:center;">Address</div>
<div class="t" style="left:150.5px;width:400px;text-align:center;top:392.94px;font-size:10.0px;color:#31363b;transform:scaleX(0.9829);transform-origin:center;">Connection</div>
<div class="t" style="left:212px;width:400px;text-align:center;top:392.94px;font-size:10.0px;color:#31363b;transform:scaleX(0.9657);transform-origin:center;">Seed</div>
<div class="t" style="left:448.5px;top:392.94px;font-size:10.0px;color:#31363b;transform:scaleX(0.9331);transform-origin:left;">Progress</div>
<svg class="b" style="left:490px;top:398.5px" width="7" height="4" viewBox="0 0 7 4"><path d="M0 4H7L3.5 0z" fill="#7b7f83"/></svg>
<div class="t" style="left:344px;width:400px;text-align:center;top:392.94px;font-size:10.0px;color:#31363b;transform:scaleX(0.9884);transform-origin:center;">Download speed</div>
<div class="t" style="left:429px;width:400px;text-align:center;top:392.94px;font-size:10.0px;color:#31363b;transform:scaleX(0.9860);transform-origin:center;">Upload speed</div>
<div class="t" style="left:506.5px;width:400px;text-align:center;top:392.94px;font-size:10.0px;color:#31363b;transform:scaleX(0.9844);transform-origin:center;">Downloaded</div>
<div class="t" style="left:762.8px;top:392.94px;font-size:10.0px;color:#31363b;transform:scaleX(0.9798);transform-origin:left;width:18.5px;overflow:hidden;">Uploaded</div>
<div class="b" style="left:141px;top:410px;width:640px;height:144px;overflow:hidden;">
<svg class="b" style="left:3px;top:6.6px" width="13" height="10" viewBox="0 0 13 10"><rect width="13" height="10" fill="#2a2f6b"/><path d="M0 0L13 10M13 0L0 10" stroke="#fff" stroke-width="2.2"/><path d="M0 0L13 10M13 0L0 10" stroke="#c8102e" stroke-width="0.8"/><path d="M6.5 0V10M0 5H13" stroke="#fff" stroke-width="3.2"/><path d="M6.5 0V10M0 5H13" stroke="#c8102e" stroke-width="1.8"/></svg>
<div class="t" style="left:20.5px;top:3.54px;font-size:10.0px;color:#31363b;transform:scaleX(0.8800);transform-origin:left;">GB</div>
<div class="t" style="left:50px;top:3.54px;font-size:10.0px;color:#31363b;transform:scaleX(0.9393);transform-origin:left;">86.4.75.247:35195</div>
<div class="t" style="left:174px;top:3.54px;font-size:10.0px;color:#31363b;transform:scaleX(0.9164);transform-origin:left;">uTP</div>
<div class="t" style="left:251px;top:3.54px;font-size:10.0px;color:#31363b;transform:scaleX(0.9300);transform-origin:left;">0</div>
<div class="t" style="left:297px;top:3.54px;font-size:10.0px;color:#31363b;transform:scaleX(0.9541);transform-origin:left;">99.85%</div>
<div class="t" style="left:359.5px;top:3.54px;font-size:10.0px;color:#31363b;transform:scaleX(0.9464);transform-origin:left;">0.00 B/s</div>
<div class="t" style="left:452px;top:3.54px;font-size:10.0px;color:#31363b;transform:scaleX(0.9464);transform-origin:left;">0.00 B/s</div>
<div class="t" style="left:529.5px;top:3.54px;font-size:10.0px;color:#31363b;transform:scaleX(0.9319);transform-origin:left;">0.00 B</div>
<div class="t" style="left:606.5px;top:3.54px;font-size:10.0px;color:#31363b;transform:scaleX(0.9319);transform-origin:left;">0.00 B</div>
<div class="b" style="left:0px;top:23.2px;width:640px;height:23.2px;background:#eff0f1;"></div>
<svg class="b" style="left:3px;top:29.8px" width="13" height="10" viewBox="0 0 13 10"><rect width="13" height="10" fill="#e0261c"/><rect width="5" height="10" fill="#1f7a2e"/><circle cx="5" cy="5" r="1.8" fill="#f3d02e"/></svg>
<div class="t" style="left:20.5px;top:26.73px;font-size:10.0px;color:#31363b;transform:scaleX(0.8800);transform-origin:left;">PT</div>
<div class="t" style="left:50px;top:26.73px;font-size:10.0px;color:#31363b;transform:scaleX(0.9382);transform-origin:left;">128.65.234.21:20406</div>
<div class="t" style="left:174px;top:26.73px;font-size:10.0px;color:#31363b;transform:scaleX(0.9164);transform-origin:left;">uTP</div>
<div class="t" style="left:251px;top:26.73px;font-size:10.0px;color:#31363b;transform:scaleX(0.9300);transform-origin:left;">0</div>
<div class="t" style="left:297px;top:26.73px;font-size:10.0px;color:#31363b;transform:scaleX(0.9541);transform-origin:left;">95.83%</div>
<div class="t" style="left:359.5px;top:26.73px;font-size:10.0px;color:#31363b;transform:scaleX(0.9464);transform-origin:left;">0.00 B/s</div>
<div class="t" style="left:452px;top:26.73px;font-size:10.0px;color:#31363b;transform:scaleX(0.9464);transform-origin:left;">0.00 B/s</div>
<div class="t" style="left:529.5px;top:26.73px;font-size:10.0px;color:#31363b;transform:scaleX(0.9319);transform-origin:left;">0.00 B</div>
<div class="t" style="left:606.5px;top:26.73px;font-size:10.0px;color:#31363b;transform:scaleX(0.9216);transform-origin:left;">74.91 MB</div>
<svg class="b" style="left:3px;top:53.0px" width="13" height="10" viewBox="0 0 13 10"><rect width="13" height="3.4" fill="#111"/><rect y="3.3" width="13" height="3.4" fill="#d8221b"/><rect y="6.6" width="13" height="3.4" fill="#f2c61c"/></svg>
<div class="t" style="left:20.5px;top:49.94px;font-size:10.0px;color:#31363b;transform:scaleX(0.8800);transform-origin:left;">DE</div>
<div class="t" style="left:50px;top:49.94px;font-size:10.0px;color:#31363b;transform:scaleX(0.9378);transform-origin:left;">194.169.217.86:34776</div>
<div class="t" style="left:174px;top:49.94px;font-size:10.0px;color:#31363b;transform:scaleX(0.9164);transform-origin:left;">uTP</div>
<div class="t" style="left:251px;top:49.94px;font-size:10.0px;color:#31363b;transform:scaleX(0.9300);transform-origin:left;">0</div>
<div class="t" style="left:297px;top:49.94px;font-size:10.0px;color:#31363b;transform:scaleX(0.9541);transform-origin:left;">73.46%</div>
<div class="t" style="left:359.5px;top:49.94px;font-size:10.0px;color:#31363b;transform:scaleX(0.9464);transform-origin:left;">0.00 B/s</div>
<div class="t" style="left:452px;top:49.94px;font-size:10.0px;color:#31363b;transform:scaleX(0.9349);transform-origin:left;">413.37 KB/s</div>
<div class="t" style="left:529.5px;top:49.94px;font-size:10.0px;color:#31363b;transform:scaleX(0.9319);transform-origin:left;">0.00 B</div>
<div class="t" style="left:606.5px;top:49.94px;font-size:10.0px;color:#31363b;transform:scaleX(0.9203);transform-origin:left;">2.68 MB</div>
<div class="b" style="left:0px;top:69.6px;width:640px;height:23.2px;background:#eff0f1;"></div>
<svg class="b" style="left:3px;top:76.2px" width="13" height="10" viewBox="0 0 13 10"><rect width="13" height="3.4" fill="#c8202e"/><rect y="3.3" width="13" height="3.4" fill="#fff"/><rect y="6.6" width="13" height="3.4" fill="#111"/><rect x="5.8" y="4.2" width="1.4" height="1.6" fill="#c09a3a"/></svg>
<div class="t" style="left:20.5px;top:73.13px;font-size:10.0px;color:#31363b;transform:scaleX(0.8800);transform-origin:left;">EG</div>
<div class="t" style="left:50px;top:73.13px;font-size:10.0px;color:#31363b;transform:scaleX(0.9374);transform-origin:left;">102.191.209.131:53982</div>
<div class="t" style="left:174px;top:73.13px;font-size:10.0px;color:#31363b;transform:scaleX(0.9164);transform-origin:left;">uTP</div>
<div class="t" style="left:251px;top:73.13px;font-size:10.0px;color:#31363b;transform:scaleX(0.9300);transform-origin:left;">0</div>
<div class="t" style="left:297px;top:73.13px;font-size:10.0px;color:#31363b;transform:scaleX(0.9588);transform-origin:left;">0.00%</div>
<div class="t" style="left:359.5px;top:73.13px;font-size:10.0px;color:#31363b;transform:scaleX(0.9464);transform-origin:left;">0.00 B/s</div>
<div class="t" style="left:452px;top:73.13px;font-size:10.0px;color:#31363b;transform:scaleX(0.9464);transform-origin:left;">0.00 B/s</div>
<div class="t" style="left:529.5px;top:73.13px;font-size:10.0px;color:#31363b;transform:scaleX(0.9319);transform-origin:left;">0.00 B</div>
<div class="t" style="left:606.5px;top:73.13px;font-size:10.0px;color:#31363b;transform:scaleX(0.9319);transform-origin:left;">0.00 B</div>
<svg class="b" style="left:3px;top:99.4px" width="13" height="10" viewBox="0 0 13 10"><rect width="13" height="10" fill="#2a2f6b"/><path d="M0 0L13 10M13 0L0 10" stroke="#fff" stroke-width="2.2"/><path d="M0 0L13 10M13 0L0 10" stroke="#c8102e" stroke-width="0.8"/><path d="M6.5 0V10M0 5H13" stroke="#fff" stroke-width="3.2"/><path d="M6.5 0V10M0 5H13" stroke="#c8102e" stroke-width="1.8"/></svg>
<div class="t" style="left:20.5px;top:96.33px;font-size:10.0px;color:#31363b;transform:scaleX(0.8800);transform-origin:left;">GB</div>
<div class="t" style="left:50px;top:96.33px;font-size:10.0px;color:#31363b;transform:scaleX(0.9387);transform-origin:left;">89.249.74.218:7775</div>
<div class="t" style="left:174px;top:96.33px;font-size:10.0px;color:#31363b;transform:scaleX(0.8800);transform-origin:left;">BT</div>
<div class="t" style="left:251px;top:96.33px;font-size:10.0px;color:#31363b;transform:scaleX(0.9300);transform-origin:left;">0</div>
<div class="t" style="left:297px;top:96.33px;font-size:10.0px;color:#31363b;transform:scaleX(0.9588);transform-origin:left;">0.00%</div>
<div class="t" style="left:359.5px;top:96.33px;font-size:10.0px;color:#31363b;transform:scaleX(0.9464);transform-origin:left;">0.00 B/s</div>
<div class="t" style="left:452px;top:96.33px;font-size:10.0px;color:#31363b;transform:scaleX(0.9464);transform-origin:left;">0.00 B/s</div>
<div class="t" style="left:529.5px;top:96.33px;font-size:10.0px;color:#31363b;transform:scaleX(0.9319);transform-origin:left;">0.00 B</div>
<div class="t" style="left:606.5px;top:96.33px;font-size:10.0px;color:#31363b;transform:scaleX(0.9319);transform-origin:left;">0.00 B</div>
<div class="b" style="left:0px;top:116.0px;width:640px;height:23.2px;background:#eff0f1;"></div>
<svg class="b" style="left:3px;top:122.6px" width="13" height="10" viewBox="0 0 13 10"><rect width="13" height="3.4" fill="#ae1c28"/><rect y="3.3" width="13" height="3.4" fill="#fff"/><rect y="6.6" width="13" height="3.4" fill="#21468b"/></svg>
<div class="t" style="left:20.5px;top:119.53px;font-size:10.0px;color:#31363b;transform:scaleX(0.8800);transform-origin:left;">NL</div>
<div class="t" style="left:50px;top:119.53px;font-size:10.0px;color:#31363b;transform:scaleX(0.9382);transform-origin:left;">46.166.191.18:54077</div>
<div class="t" style="left:174px;top:119.53px;font-size:10.0px;color:#31363b;transform:scaleX(0.9164);transform-origin:left;">uTP</div>
<div class="t" style="left:251px;top:119.53px;font-size:10.0px;color:#31363b;transform:scaleX(0.9300);transform-origin:left;">0</div>
<div class="t" style="left:297px;top:119.53px;font-size:10.0px;color:#31363b;transform:scaleX(0.9588);transform-origin:left;">0.00%</div>
<div class="t" style="left:359.5px;top:119.53px;font-size:10.0px;color:#31363b;transform:scaleX(0.9464);transform-origin:left;">0.00 B/s</div>
<div class="t" style="left:452px;top:119.53px;font-size:10.0px;color:#31363b;transform:scaleX(0.9464);transform-origin:left;">0.00 B/s</div>
<div class="t" style="left:529.5px;top:119.53px;font-size:10.0px;color:#31363b;transform:scaleX(0.9319);transform-origin:left;">0.00 B</div>
<div class="t" style="left:606.5px;top:119.53px;font-size:10.0px;color:#31363b;transform:scaleX(0.9319);transform-origin:left;">0.00 B</div>
</div>
<div class="b" style="left:781px;top:392px;width:10px;height:167px;background:#eff0f1;box-sizing:border-box;border-left:1px solid #dcdddf;"></div>
<div class="b" style="left:781.5px;top:392.5px;width:9px;height:11.5px;background:#a5a6a7;"></div>
<div class="b" style="left:141px;top:554px;width:640px;height:5px;background:#eff0f1;"></div>
<div class="b" style="left:142px;top:554px;width:64px;height:5px;background:#a5a6a7;"></div>
<div class="b" style="left:781px;top:554px;width:10px;height:5px;background:#fcfcfc;box-sizing:border-box;border-top:1px solid #d3d5d7;border-left:1px solid #d3d5d7;"></div>
</body></html>
